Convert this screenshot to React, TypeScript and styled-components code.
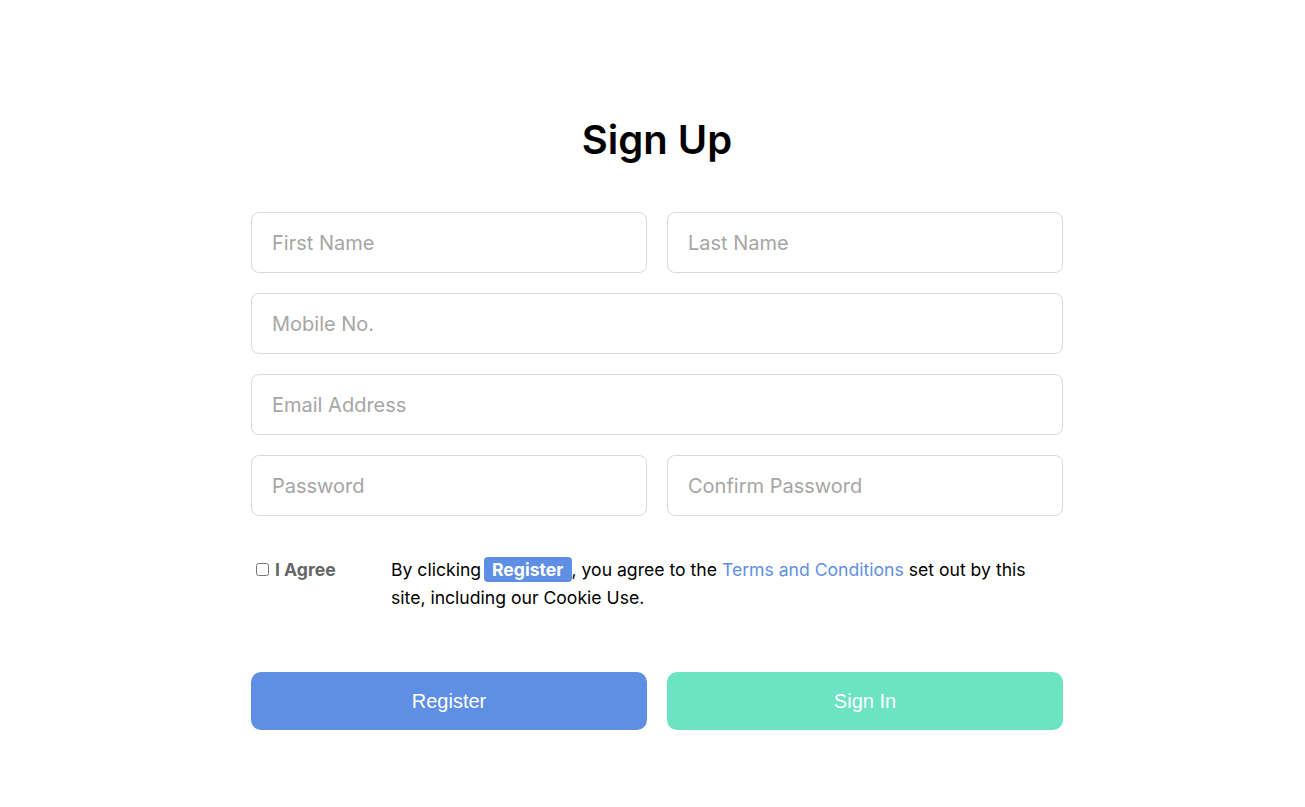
import styled, { createGlobalStyle } from 'styled-components';

const GlobalStyle = createGlobalStyle`
  body {
    margin: 0;
    background: #ffffff;
    font-family: Inter, 'Noto Sans', sans-serif;
    color: #111111;
  }
`;

export default function App() {
  return (
    <>
      <GlobalStyle />
      <Page>
        <Title>Sign Up</Title>
        <Form onSubmit={(e) => e.preventDefault()}>
          <Row>
            <Input placeholder="First Name" />
            <Input placeholder="Last Name" />
          </Row>
          <Input placeholder="Mobile No." />
          <Input placeholder="Email Address" />
          <Row>
            <Input type="password" placeholder="Password" />
            <Input type="password" placeholder="Confirm Password" />
          </Row>
          <Agreement>
            <AgreeLabel>
              <Check type="checkbox" />I Agree
            </AgreeLabel>
            <Terms>
              By clicking <Badge>Register</Badge>, you agree to the{' '}
              <TermsLink href="#">Terms and Conditions</TermsLink> set out by this site,
              including our Cookie Use.
            </Terms>
          </Agreement>
          <Row>
            <Button type="submit" $color="#5f8fe4">Register</Button>
            <Button type="button" $color="#6ce3c3">Sign In</Button>
          </Row>
        </Form>
      </Page>
    </>
  );
}

const Page = styled.div`
  width: 812px;
  margin: 0 auto;
  padding: 116px 0 0 9px;
`;

const Title = styled.h1`
  margin: 0 0 48px;
  font-size: 40px;
  line-height: 48px;
  font-weight: 600;
  text-align: center;
  color: #000;
`;

const Form = styled.form`
  display: flex;
  flex-direction: column;
  gap: 20px;
`;

const Row = styled.div`
  display: grid;
  grid-template-columns: 1fr 1fr;
  gap: 20px;
`;

const Input = styled.input`
  box-sizing: border-box;
  width: 100%;
  height: 61px;
  padding: 0 20px;
  border: 1px solid #dadada;
  border-radius: 8px;
  font-family: Inter, sans-serif;
  font-size: 20px;
  color: #222;
  outline: none;

  &::placeholder {
    color: #a6a6a6;
  }
`;

const Agreement = styled.div`
  display: grid;
  grid-template-columns: 140px 1fr;
  margin: 20px 0 40px;
`;

const AgreeLabel = styled.label`
  display: flex;
  align-items: center;
  align-self: start;
  height: 26px;
  font-size: 17.6px;
  font-weight: 700;
  color: #666666;
`;

const Check = styled.input`
  width: 13px;
  height: 13px;
  margin: 0 6px 0 5px;
`;

const Terms = styled.p`
  margin: 0;
  padding-right: 24px;
  font-size: 17.6px;
  line-height: 28px;
  color: #000;
`;

const Badge = styled.span`
  margin-left: -2px;
  padding: 2px 8px;
  border-radius: 4px;
  background: #5f8fe4;
  color: #fff;
  font-weight: 700;
`;

const TermsLink = styled.a`
  color: #5f8fe4;
  text-decoration: none;
`;

const Button = styled.button<{ $color: string }>`
  height: 58px;
  border: none;
  border-radius: 10px;
  background: ${(p) => p.$color};
  color: #fff;
  font-family: 'Liberation Sans', Arial, sans-serif;
  font-size: 20px;
  cursor: pointer;
`;
